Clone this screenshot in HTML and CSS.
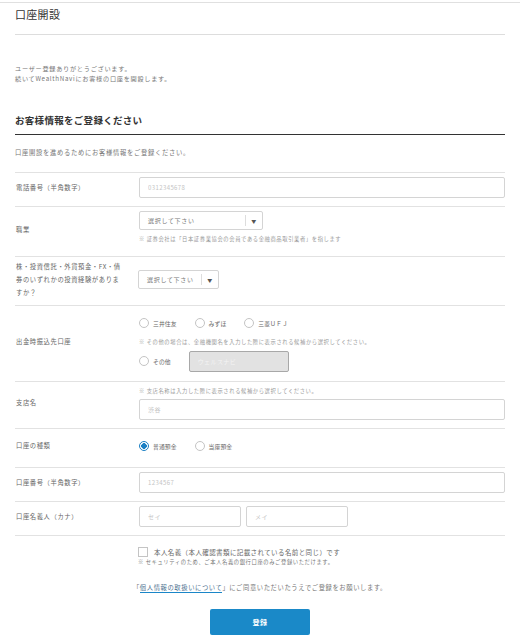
FILE: index.html
```html
<!DOCTYPE html>
<html lang="ja">
<head>
    <meta charset="UTF-8">
    <meta name="viewport" content="width=device-width, initial-scale=1.0">
    <title>口座開設</title>
    <link rel="stylesheet" href="styles.css">
</head>
<body>
    <div class="topbar"></div>

    <main class="page">
        <h1 class="page-title">口座開設</h1>

        <p class="intro">
            ユーザー登録ありがとうございます。<br>
            続いてWealthNaviにお客様の口座を開設します。
        </p>

        <h2 class="section-title">お客様情報をご登録ください</h2>
        <p class="lead">口座開設を進めるためにお客様情報をご登録ください。</p>

        <form class="form">
            <div class="row">
                <label class="label" for="tel">電話番号（半角数字）</label>
                <div class="field">
                    <input class="text" type="text" id="tel" placeholder="0312345678">
                </div>
            </div>

            <div class="row">
                <label class="label">職業</label>
                <div class="field">
                    <div class="select select-wide">
                        <span class="select-value">選択して下さい</span>
                        <span class="select-arrow">▼</span>
                    </div>
                    <p class="note">※ 証券会社は「日本証券業協会の会員である金融商品取引業者」を指します</p>
                </div>
            </div>

            <div class="row row-tall">
                <label class="label label-multi">株・投資信託・外貨預金・FX・債券のいずれかの投資経験がありますか？</label>
                <div class="field">
                    <div class="select select-narrow">
                        <span class="select-value">選択して下さい</span>
                        <span class="select-arrow">▼</span>
                    </div>
                </div>
            </div>

            <div class="row row-bank">
                <label class="label">出金時振込先口座</label>
                <div class="field">
                    <div class="radios">
                        <span class="radio"></span><span class="radio-label">三井住友</span>
                        <span class="radio"></span><span class="radio-label">みずほ</span>
                        <span class="radio"></span><span class="radio-label">三菱ＵＦＪ</span>
                    </div>
                    <p class="note">※ その他の場合は、金融機関名を入力した際に表示される候補から選択してください。</p>
                    <div class="radios">
                        <span class="radio"></span><span class="radio-label">その他</span>
                        <input class="text text-disabled" type="text" placeholder="ウェルスナビ" disabled>
                    </div>
                </div>
            </div>

            <div class="row">
                <label class="label" for="branch">支店名</label>
                <div class="field">
                    <p class="note note-top">※ 支店名称は入力した際に表示される候補から選択してください。</p>
                    <input class="text" type="text" id="branch" placeholder="渋谷">
                </div>
            </div>

            <div class="row">
                <label class="label">口座の種類</label>
                <div class="field">
                    <div class="radios radios-type">
                        <span class="radio checked"></span><span class="radio-label">普通預金</span>
                        <span class="radio"></span><span class="radio-label">当座預金</span>
                    </div>
                </div>
            </div>

            <div class="row">
                <label class="label" for="number">口座番号（半角数字）</label>
                <div class="field">
                    <input class="text" type="text" id="number" placeholder="1234567">
                </div>
            </div>

            <div class="row">
                <label class="label">口座名義人（カナ）</label>
                <div class="field field-pair">
                    <input class="text text-half" type="text" placeholder="セイ">
                    <input class="text text-half" type="text" placeholder="メイ">
                </div>
            </div>
        </form>

        <div class="confirm">
            <div class="check-line">
                <span class="checkbox"></span>
                <span>本人名義（本人確認書類に記載されている名前と同じ）です</span>
            </div>
            <p class="note note-confirm">※ セキュリティのため、ご本人名義の銀行口座のみご登録いただけます。</p>
        </div>

        <p class="agree">「<a href="#privacy">個人情報の取扱いについて</a>」にご同意いただいたうえでご登録をお願いします。</p>

        <div class="actions">
            <button class="submit" type="button">登録</button>
        </div>
    </main>
</body>
</html>
```

FILE: styles.css
```css
body {
    margin: 0;
    padding-top: 2px;
    font-family: "Noto Sans CJK JP", "Noto Sans", sans-serif;
    color: #555;
    background: #fff;
}

.topbar {
    border-top: 1px solid #e0e0e0;
}

.page {
    padding: 0 15px;
}

.page-title {
    margin: 0;
    padding: 3px 0 12px;
    font-size: 11px;
    line-height: 16px;
    font-weight: normal;
    color: #333;
    letter-spacing: 0.3px;
    border-bottom: 1px solid #ddd;
}

.intro {
    margin: 29px 0 0;
    font-size: 6.2px;
    line-height: 10px;
    letter-spacing: 0.7px;
    color: #777;
}

.section-title {
    margin: 29px 0 0;
    padding-bottom: 7px;
    font-size: 9.5px;
    line-height: 14px;
    letter-spacing: 0.3px;
    color: #333;
    border-bottom: 1px solid #333;
}

.lead {
    margin: 13px 0 0;
    font-size: 6.3px;
    line-height: 10px;
    letter-spacing: 0.7px;
    color: #777;
}

/* form rows */
.form {
    margin-top: 14px;
    border-top: 1px solid #e2e2e2;
}

.row {
    display: flex;
    align-items: center;
    padding: 4px 0 8px;
    border-bottom: 1px solid #e2e2e2;
}

.row-tall {
    padding: 3px 0 6px;
}

.row-bank {
    padding: 7px 0 10px;
}

.label {
    width: 123px;
    flex-shrink: 0;
    padding-left: 1px;
    font-size: 6.3px;
    line-height: 10px;
    letter-spacing: 0.6px;
    color: #666;
}

.label-multi {
    padding-right: 12px;
    box-sizing: border-box;
    line-height: 13px;
}

.field {
    flex: 1;
    min-width: 0;
}

.field-pair {
    display: flex;
    gap: 5px;
}

.text {
    display: block;
    width: 100%;
    height: 21px;
    box-sizing: border-box;
    margin: 0;
    padding: 0 8px;
    border: 1px solid #d4d4d4;
    border-radius: 2px;
    font-family: inherit;
    font-size: 6px;
    letter-spacing: 0.4px;
    color: #555;
    background: #fff;
}

.text::placeholder {
    color: #c4c4c4;
}

.text-half {
    width: 102px;
}

.text-disabled {
    width: 100px;
    border-color: #a8a8a8;
    background: #e2e2e2;
}

.text-disabled::placeholder {
    color: #f4f4f4;
}

.select {
    display: flex;
    align-items: center;
    height: 19px;
    box-sizing: border-box;
    border: 1px solid #d4d4d4;
    border-radius: 2px;
    font-size: 6px;
    letter-spacing: 0.7px;
    color: #777;
}

.select-wide {
    width: 124px;
}

.select-narrow {
    width: 81px;
}

.select-value {
    flex: 1;
    padding-left: 8px;
}

.select-arrow {
    width: 16px;
    line-height: 11px;
    text-align: center;
    font-size: 5px;
    color: #555;
    border-left: 1px solid #ddd;
}

.note {
    margin: 4px 0;
    font-size: 5.3px;
    line-height: 10px;
    letter-spacing: 0.6px;
    color: #999;
}

.note-top {
    margin: 0 0 3px;
}

/* radio buttons */
.radios {
    display: flex;
    align-items: center;
    height: 20px;
    font-size: 5.8px;
    letter-spacing: 0.1px;
    color: #666;
}

.radios-type {
    height: 26px;
}

.radio {
    width: 10px;
    height: 10px;
    box-sizing: border-box;
    border: 1px solid #c4c4c4;
    border-radius: 50%;
    flex-shrink: 0;
}

.radio.checked {
    border: 1.5px solid #1a7fc4;
    background: radial-gradient(circle, #1a7fc4 0 2.6px, #fff 3px);
}

.radio-label {
    margin: 0 18px 0 4px;
}

/* confirmation and submit */
.confirm {
    padding-left: 123px;
    margin-top: 10px;
}

.check-line {
    display: flex;
    align-items: center;
    gap: 6px;
    font-size: 6.5px;
    line-height: 12px;
    letter-spacing: 0.4px;
    color: #666;
}

.checkbox {
    width: 8px;
    height: 8px;
    border: 1px solid #c4c4c4;
    flex-shrink: 0;
}

.note-confirm {
    margin: 0;
    line-height: 9px;
    color: #777;
}

.agree {
    margin: 16px 0 0;
    text-align: center;
    font-size: 6.3px;
    line-height: 10px;
    letter-spacing: 0.6px;
    color: #777;
}

.agree a {
    color: #4f7392;
    text-decoration: none;
    border-bottom: 1px solid #1a86c8;
}

.actions {
    margin-top: 13px;
    text-align: center;
}

.submit {
    width: 100px;
    height: 26px;
    border: none;
    border-radius: 2px;
    background: #1a89c8;
    color: #fff;
    font-family: inherit;
    font-size: 7px;
    font-weight: bold;
    letter-spacing: 0.5px;
    cursor: pointer;
}
```
